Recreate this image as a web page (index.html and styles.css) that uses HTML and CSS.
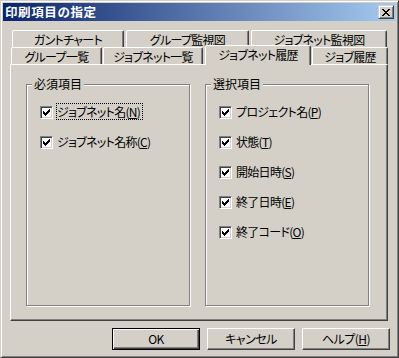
FILE: index.html
```html
<!DOCTYPE html>
<html lang="ja">
<head>
<meta charset="utf-8">
<title>印刷項目の指定</title>
<link rel="stylesheet" href="styles.css">
</head>
<body>
<div class="window">
  <div class="titlebar">
    <span class="title">印刷項目の指定</span>
    <button class="close" type="button" aria-label="閉じる">
      <svg width="8" height="7" viewBox="0 0 8 7" shape-rendering="crispEdges"><path d="M0 0h2v1H0zM6 0h2v1H6zM1 1h2v1H1zM5 1h2v1H5zM2 2h4v1H2zM3 3h2v1H3zM2 4h4v1H2zM1 5h2v1H1zM5 5h2v1H5zM0 6h2v1H0zM6 6h2v1H6z" fill="#000"/></svg>
    </button>
  </div>
  <div class="body">
    <div class="tabrow back">
      <div class="tab t-gantt">ガントチャート</div>
      <div class="tab t-groupmon">グループ監視図</div>
      <div class="tab t-jnmon">ジョブネット監視図</div>
    </div>
    <div class="tabrow front">
      <div class="tab t-grouplist">グループ一覧</div>
      <div class="tab t-jnlist">ジョブネット一覧</div>
      <div class="tab selected">ジョブネット履歴</div>
      <div class="tab t-jobhist">ジョブ履歴</div>
    </div>
    <div class="panel">
      <div class="group">
        <div class="legend">必須項目</div>
        <div class="items">
          <div class="item">
            <span class="check"><svg width="7" height="7" viewBox="0 0 7 7" shape-rendering="crispEdges"><path d="M0 2h1v3H0zM1 3h1v3H1zM2 4h1v3H2zM3 3h1v3H3zM4 2h1v3H4zM5 1h1v3H5zM6 0h1v3H6z" fill="#000"/></svg></span>
            <span class="label focus">ジョブネット名(<u>N</u>)</span>
          </div>
          <div class="item">
            <span class="check"><svg width="7" height="7" viewBox="0 0 7 7" shape-rendering="crispEdges"><path d="M0 2h1v3H0zM1 3h1v3H1zM2 4h1v3H2zM3 3h1v3H3zM4 2h1v3H4zM5 1h1v3H5zM6 0h1v3H6z" fill="#000"/></svg></span>
            <span class="label">ジョブネット名称(<u>C</u>)</span>
          </div>
        </div>
      </div>
      <div class="group">
        <div class="legend">選択項目</div>
        <div class="items">
          <div class="item">
            <span class="check"><svg width="7" height="7" viewBox="0 0 7 7" shape-rendering="crispEdges"><path d="M0 2h1v3H0zM1 3h1v3H1zM2 4h1v3H2zM3 3h1v3H3zM4 2h1v3H4zM5 1h1v3H5zM6 0h1v3H6z" fill="#000"/></svg></span>
            <span class="label">プロジェクト名(<u>P</u>)</span>
          </div>
          <div class="item">
            <span class="check"><svg width="7" height="7" viewBox="0 0 7 7" shape-rendering="crispEdges"><path d="M0 2h1v3H0zM1 3h1v3H1zM2 4h1v3H2zM3 3h1v3H3zM4 2h1v3H4zM5 1h1v3H5zM6 0h1v3H6z" fill="#000"/></svg></span>
            <span class="label">状態(<u>T</u>)</span>
          </div>
          <div class="item">
            <span class="check"><svg width="7" height="7" viewBox="0 0 7 7" shape-rendering="crispEdges"><path d="M0 2h1v3H0zM1 3h1v3H1zM2 4h1v3H2zM3 3h1v3H3zM4 2h1v3H4zM5 1h1v3H5zM6 0h1v3H6z" fill="#000"/></svg></span>
            <span class="label">開始日時(<u>S</u>)</span>
          </div>
          <div class="item">
            <span class="check"><svg width="7" height="7" viewBox="0 0 7 7" shape-rendering="crispEdges"><path d="M0 2h1v3H0zM1 3h1v3H1zM2 4h1v3H2zM3 3h1v3H3zM4 2h1v3H4zM5 1h1v3H5zM6 0h1v3H6z" fill="#000"/></svg></span>
            <span class="label">終了日時(<u>E</u>)</span>
          </div>
          <div class="item">
            <span class="check"><svg width="7" height="7" viewBox="0 0 7 7" shape-rendering="crispEdges"><path d="M0 2h1v3H0zM1 3h1v3H1zM2 4h1v3H2zM3 3h1v3H3zM4 2h1v3H4zM5 1h1v3H5zM6 0h1v3H6z" fill="#000"/></svg></span>
            <span class="label">終了コード(<u>O</u>)</span>
          </div>
        </div>
      </div>
    </div>
    <div class="buttons">
      <button class="btn default" type="button">OK</button>
      <button class="btn" type="button">キャンセル</button>
      <button class="btn" type="button">ヘルプ(<u>H</u>)</button>
    </div>
  </div>
</div>
</body>
</html>
```

FILE: styles.css
```css
* { box-sizing: border-box; }
html, body { margin: 0; padding: 0; }
body {
  width: 399px;
  height: 358px;
  background: #D4D0C8;
  font-family: "Noto Sans CJK JP", "Noto Sans", sans-serif;
  font-size: 12px;
  color: #000;
  font-feature-settings: "palt";
  overflow: hidden;
}
button { font: inherit; color: inherit; font-feature-settings: "palt"; }
u { text-decoration: underline; text-underline-offset: 1px; }

.window {
  width: 399px;
  height: 358px;
  border: 1px solid;
  border-color: #D4D0C8 #404040 #404040 #D4D0C8;
  box-shadow: inset 1px 1px 0 #fff, inset -1px -1px 0 #808080;
  padding: 2px;
  background: #D4D0C8;
  display: flex;
  flex-direction: column;
}

.titlebar {
  height: 18px;
  flex: none;
  display: flex;
  align-items: center;
  padding: 0 2px 0 2px;
  background: linear-gradient(to right, #0A246A, #A6CAF0);
}
.title {
  color: #fff;
  font-weight: bold;
  font-size: 12.5px;
  letter-spacing: 0.6px;
  line-height: 18px;
  font-feature-settings: normal;
}
.close {
  margin: 0 0 0 auto;
  width: 16px;
  height: 14px;
  padding: 0;
  background: #D4D0C8;
  border: 1px solid;
  border-color: #D4D0C8 #404040 #404040 #D4D0C8;
  box-shadow: inset 1px 1px 0 #fff, inset -1px -1px 0 #808080;
  display: flex;
  align-items: flex-start;
  justify-content: flex-start;
}
.close svg { display: block; margin: 3px 0 0 3px; }

.body {
  flex: 1;
  display: flex;
  flex-direction: column;
  padding-top: 9px;
}

.tabrow { display: flex; height: 17px; flex: none; }
.tabrow.back { margin-left: 9px; gap: 2px; }
.tabrow.front { margin-left: 8px; }

.tab {
  height: 17px;
  background: #D4D0C8;
  border-top: 1px solid #fff;
  border-left: 1px solid #fff;
  border-right: 1px solid #404040;
  box-shadow: inset -1px 0 0 #808080;
  border-radius: 2px 2px 0 0;
  display: flex;
  align-items: center;
  justify-content: center;
  white-space: nowrap;
  line-height: 15px;
  letter-spacing: -0.7px;
}
.t-gantt { width: 112px; }
.t-groupmon { width: 123px; }
.t-jnmon { width: 136px; }
.t-grouplist { width: 91px; margin-right: 1px; }
.t-jnlist { width: 100px; margin-right: 2px; }
.t-jobhist { width: 76px; }
.tab.selected {
  width: 106px;
  height: 20px;
  margin: -2px 1px -1px 0;
  padding-bottom: 3px;
  position: relative;
  z-index: 2;
}

.panel {
  flex: none;
  margin-left: 7px;
  width: 378px;
  height: 257px;
  border-top: 1px solid #fff;
  border-left: 1px solid #fff;
  border-right: 1px solid #404040;
  border-bottom: 1px solid #404040;
  box-shadow: inset -1px -1px 0 #808080;
  display: flex;
  gap: 15px;
  padding: 19px 0 0 15px;
}

.group {
  width: 164px;
  height: 222px;
  border: 1px solid #808080;
  box-shadow: inset 1px 1px 0 #fff, 1px 1px 0 #fff;
  display: flex;
  flex-direction: column;
}
.legend {
  align-self: flex-start;
  margin: -8px 0 0 5px;
  padding: 0 2px;
  height: 13px;
  line-height: 13px;
  background: #D4D0C8;
  white-space: nowrap;
}
.items {
  display: flex;
  flex-direction: column;
  gap: 13px;
  margin-top: 13px;
  padding-left: 13px;
}
.item {
  display: flex;
  align-items: flex-start;
  height: 17px;
}
.check {
  flex: none;
  width: 13px;
  height: 13px;
  margin: 3px 3px 0 0;
  padding: 2px;
  background: #fff;
  border: 1px solid;
  border-color: #808080 #fff #fff #808080;
  box-shadow: inset 1px 1px 0 #404040, inset -1px -1px 0 #D4D0C8;
}
.check svg { display: block; }
.label {
  height: 17px;
  line-height: 15px;
  border: 1px dotted transparent;
  padding-right: 2px;
  white-space: nowrap;
  letter-spacing: -0.7px;
}
.label.focus { border-color: #000; }

.buttons {
  display: flex;
  justify-content: flex-end;
  gap: 7px;
  margin: 7px 6px 0 0;
}
.btn {
  width: 88px;
  height: 22px;
  padding: 0;
  background: #D4D0C8;
  border: 1px solid;
  border-color: #fff #404040 #404040 #fff;
  box-shadow: inset -1px -1px 0 #808080;
  line-height: 18px;
  text-align: center;
  letter-spacing: -0.5px;
}
.btn.default {
  border-color: #000;
  box-shadow: inset 1px 1px 0 #fff, inset -1px -1px 0 #404040, inset -2px -2px 0 #808080;
}
```
